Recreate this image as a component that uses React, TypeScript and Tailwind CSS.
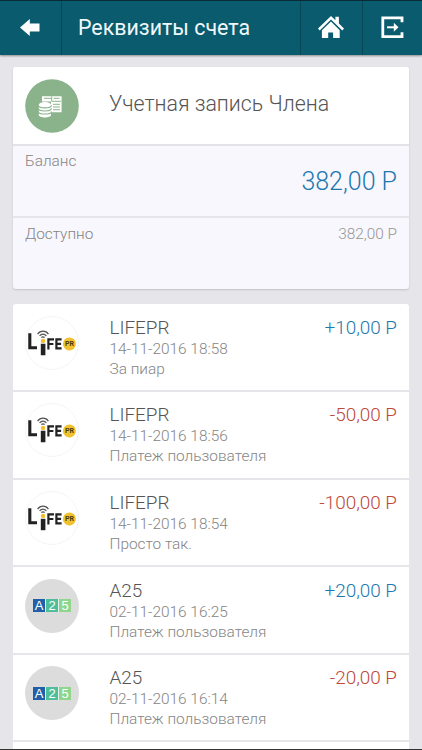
type Transaction = {
  name: string;
  date: string;
  note: string;
  amount: string;
  logo: 'life' | 'a25';
};

const transactions: Transaction[] = [
  { name: 'LIFEPR', date: '14-11-2016 18:58', note: 'За пиар', amount: '+10,00 Р', logo: 'life' },
  { name: 'LIFEPR', date: '14-11-2016 18:56', note: 'Платеж пользователя', amount: '-50,00 Р', logo: 'life' },
  { name: 'LIFEPR', date: '14-11-2016 18:54', note: 'Просто так.', amount: '-100,00 Р', logo: 'life' },
  { name: 'A25', date: '02-11-2016 16:25', note: 'Платеж пользователя', amount: '+20,00 Р', logo: 'a25' },
  { name: 'A25', date: '02-11-2016 16:14', note: 'Платеж пользователя', amount: '-20,00 Р', logo: 'a25' },
];

function BackIcon() {
  return (
    <svg width="20" height="17" viewBox="0 0 20 17" fill="#fff">
      <path d="M0 8.5 9.8 0v4.5H19.5v8H9.8V17z" />
    </svg>
  );
}

function HomeIcon() {
  return (
    <svg width="26" height="23" viewBox="0 0 26 23" fill="#fff">
      <path d="M13 0 0 12.6l1.7 1.8L13 3.6l11.3 10.8 1.7-1.8-5.1-5V.7h-3.5v3.6z" />
      <path d="M13 5.6 3.9 14.2V22h6.3v-5.6h4.9V22h6.6v-7.8z" />
    </svg>
  );
}

function ExitIcon() {
  return (
    <svg width="23" height="23" viewBox="0 0 23 23" fill="none" stroke="#fff">
      <path d="M21 6.2V1.8H1.8v18.9H21v-4.4" strokeWidth="2.8" />
      <path d="M6 11.3h8.5" strokeWidth="2" />
      <path d="M12.8 6.8 17.5 11.3l-4.7 4.5z" fill="#fff" stroke="none" />
    </svg>
  );
}

function AccountIcon() {
  return (
    <svg className="block" width="54" height="54" viewBox="0 0 54 54">
      <circle cx="27" cy="27" r="26.8" fill="#8ab38c" />
      <path d="M17 17.2h19.6v16H26V22.5H17z" fill="#fff" />
      <g stroke="#8ab38c" strokeWidth="1">
        <path d="M19 19.3h7M28.5 19.3h6M27 22.3h9M28 25.3h7M28 28h7M28 30.7h7" />
        <path d="M26.7 17.4v5" />
      </g>
      <path d="M13.8 26c0-4 12.2-4 12.2 0v9.7c0 3.6-12.2 3.6-12.2 0z" fill="#fff" />
      <path
        d="M13.4 26.2c0 3.5 13 3.5 13 0M13.4 29.3c0 3.5 13 3.5 13 0M13.4 32.4c0 3.5 13 3.5 13 0"
        fill="none"
        stroke="#8ab38c"
        strokeWidth="1.1"
      />
    </svg>
  );
}

function LifeLogo() {
  return (
    <svg className="block" width="54" height="54" viewBox="0 0 54 54">
      <circle cx="27" cy="27" r="26.5" fill="#fff" stroke="#eef2f5" strokeWidth=".8" />
      <path d="M4.8 17.2v14.5H12" fill="none" stroke="#222" strokeWidth="3.1" />
      <path d="M15.8 27.8h4.6v11.4h-4.6z" fill="#222" />
      <circle cx="18" cy="24.9" r="2.2" fill="#f3bf25" />
      <g fill="none" stroke="#555" strokeWidth="1.2">
        <path d="M12.6 18.2c2.6-4 8.2-4 10.8 0" />
        <path d="M14.6 20c1.8-2.6 5-2.6 6.8 0" />
        <path d="M16.4 21.7c.9-1.2 2.3-1.2 3.2 0" />
      </g>
      <g fill="none" stroke="#222" strokeWidth="2.2">
        <path d="M23.4 33.4V23.4h5.6M23.4 28h5" />
        <path d="M36.6 23.4h-5.2v8.9h5.2M31.4 27.8h4.7" />
      </g>
      <circle cx="44.4" cy="27.9" r="6.5" fill="#f2c22e" />
      <text x="44.4" y="30.4" textAnchor="middle" className="font-['Roboto',sans-serif] text-[7px] font-bold" fill="#493b16">
        PR
      </text>
    </svg>
  );
}

function A25Logo() {
  return (
    <div className="flex h-[54px] w-[54px] items-center justify-center rounded-full bg-[#dcdcdc] font-['Liberation_Sans',sans-serif] text-[13px] font-normal leading-[13px] text-white">
      <div className="flex h-[13px] items-center gap-px bg-[#e9efee]">
        <span className="h-[13px] w-[12px] bg-[#2160a9] text-center">A</span>
        <span className="h-[13px] w-[12px] bg-[#4fbf9b] text-center">2</span>
        <span className="h-[13px] w-[12px] bg-[#8fd68d] text-center">5</span>
      </div>
    </div>
  );
}

function TransactionRow({ item }: { item: Transaction }) {
  return (
    <div className="flex h-[87.67px] shrink-0 border-b-2 border-[#e6e5ea] pl-3 pr-3 pt-[11.5px]">
      <div className="w-[84.5px] shrink-0">{item.logo === 'life' ? <LifeLogo /> : <A25Logo />}</div>
      <div className="min-w-0 flex-1 whitespace-nowrap text-[15.4px] leading-5 text-[#858585]">
        <div className="text-[18.9px] leading-[23px] text-[#555]">{item.name}</div>
        <div>{item.date}</div>
        <div>{item.note}</div>
      </div>
      <div
        className={`whitespace-nowrap text-[18.9px] leading-[23px] ${item.amount.startsWith('+') ? 'text-[#2277ae]' : 'text-[#bd4936]'}`}
      >
        {item.amount}
      </div>
    </div>
  );
}

export default function App() {
  return (
    <div className="flex h-[750px] w-[422px] flex-col overflow-hidden border-b border-[#333] bg-[#e6e5ea] font-['Roboto',sans-serif] font-light">
      <header className="flex h-[55px] shrink-0 border-t border-[#072c38] bg-[#0a5b6e] shadow-[0_1px_2px_rgba(0,0,0,0.4)]">
        <button className="flex w-[62px] items-center justify-center border-r border-[#064655] pb-px pr-px">
          <BackIcon />
        </button>
        <h1 className="flex flex-1 items-center whitespace-nowrap pl-[16px] pt-px text-[21.4px] font-normal text-[#f0f8fa]">
          Реквизиты счета
        </h1>
        <button className="flex w-[62px] items-center justify-center border-l border-[#064655] pb-px pr-px">
          <HomeIcon />
        </button>
        <button className="flex w-[60px] items-center justify-center border-l border-[#064655] pb-px">
          <ExitIcon />
        </button>
      </header>

      <section className="mx-[13px] mt-3 h-[222px] shrink-0 overflow-hidden rounded-[3px] bg-[#f8f7fd] shadow-[0_1px_2px_rgba(0,0,0,0.15)]">
        <div className="flex h-[78.5px] items-start border-b-2 border-[#e3e2e7] bg-white pl-3 pt-[11.5px]">
          <div className="w-[84px]">
            <AccountIcon />
          </div>
          <h2 className="whitespace-nowrap pt-[12px] text-[21.3px] leading-[26px] text-[#555]">Учетная запись Члена</h2>
        </div>
        <div className="flex h-[72px] justify-between border-b-2 border-[#e6e5ea] px-3 text-[15.4px] text-[#858585]">
          <span className="pt-[5.5px] leading-5">Баланс</span>
          <span className="pt-[20.5px] text-[25px] leading-8 text-[#2277ae]">382,00 Р</span>
        </div>
        <div className="flex justify-between px-3 pt-[6.5px] text-[15.4px] leading-5 text-[#858585]">
          <span>Доступно</span>
          <span className="text-[#959595]">382,00 Р</span>
        </div>
      </section>

      <section className="mx-[13px] mt-[15px] flex min-h-0 flex-1 flex-col overflow-hidden rounded-t-[3px] bg-white pt-[0.2px]">
        {transactions.map((item, index) => (
          <TransactionRow key={index} item={item} />
        ))}
      </section>
    </div>
  );
}
